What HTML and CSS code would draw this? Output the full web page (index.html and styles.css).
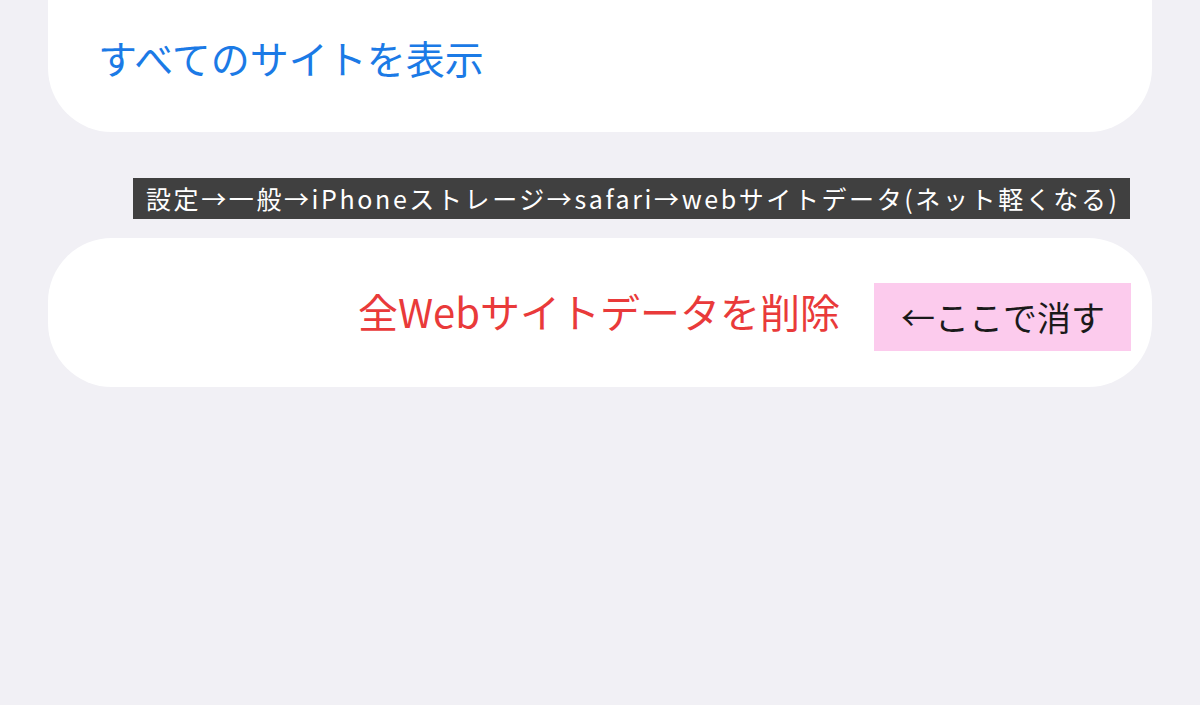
FILE: index.html
```html
<!DOCTYPE html>
<html lang="ja">
<head>
    <meta charset="UTF-8">
    <meta name="viewport" content="width=device-width, initial-scale=1.0">
    <title>Safari</title>
    <link rel="stylesheet" href="styles.css">
</head>
<body>
    <div class="page">
        <div class="card card-top">
            <span class="link-blue">すべてのサイトを表示</span>
        </div>

        <div class="caption">設定→一般→iPhoneストレージ→safari→webサイトデータ(ネット軽くなる)</div>

        <div class="card card-delete">
            <span class="link-red">全Webサイトデータを削除</span>
            <span class="note">←ここで消す</span>
        </div>
    </div>
</body>
</html>
```

FILE: styles.css
```css
body {
    margin: 0;
    background-color: #f1f0f5;
    font-family: "Noto Sans CJK JP", "Noto Sans", sans-serif;
}
.page {
    padding: 0 48px;
}
.card {
    background-color: #fff;
}
.card-top {
    border-radius: 0 0 64px 64px;
    padding: 31px 50px 48px;
}
.link-blue {
    color: #1b7ae6;
    font-size: 39px;
    line-height: 53px;
}
.caption {
    display: inline-block;
    margin: 46px 0 0 85px;
    padding: 0 10px 0 13px;
    background-color: #404040;
    color: #fff;
    font-size: 25px;
    letter-spacing: 2.6px;
    line-height: 41px;
    white-space: nowrap;
}
.card-delete {
    margin-top: 19px;
    height: 149px;
    border-radius: 64px;
    display: flex;
    align-items: center;
    justify-content: flex-end;
    gap: 34px;
    padding-right: 21px;
}
.link-red {
    color: #e93a3a;
    font-size: 40px;
    margin-top: -4px;
}
.note {
    background-color: #fccbed;
    color: #1a1a1a;
    font-size: 34px;
    line-height: 68px;
    padding: 0 26px 0 27px;
    margin-top: 9px;
}
```
